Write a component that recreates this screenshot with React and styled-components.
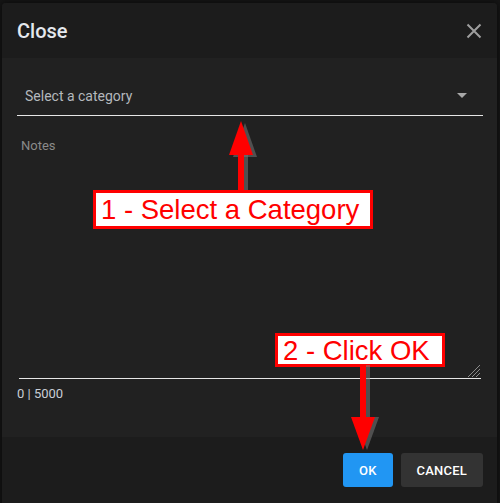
import React from "react";
import styled, { createGlobalStyle } from "styled-components";

const GlobalStyle = createGlobalStyle`
  html, body {
    margin: 0;
    padding: 0;
    background: #151515;
    font-family: Roboto, "Noto Sans", sans-serif;
    overflow: hidden;
  }
`;

const Page = styled.div`
  position: relative;
  width: 500px;
  height: 503px;
  padding: 3px 0 0 2px;
  box-sizing: border-box;
`;

const Dialog = styled.div`
  width: 495px;
  height: 520px;
  background: #212121;
  border-radius: 4px;
  overflow: hidden;
  display: flex;
  flex-direction: column;
  box-shadow: 0 0 6px rgba(0, 0, 0, 0.6);
`;

const Header = styled.div`
  height: 55px;
  background: #1c1c1c;
  display: flex;
  align-items: center;
  justify-content: space-between;
  padding: 0 11px 0 15px;
  flex-shrink: 0;
`;

const Title = styled.h2`
  margin: 0;
  font-size: 20px;
  font-weight: 500;
  color: #e4e8ee;
`;

const CloseButton = styled.button`
  background: none;
  border: none;
  padding: 0;
  width: 24px;
  height: 24px;
  display: flex;
  align-items: center;
  justify-content: center;
  cursor: pointer;
`;

const Body = styled.div`
  height: 379px;
  padding: 0 14px 0 15px;
  display: flex;
  flex-direction: column;
  flex-shrink: 0;
`;

const SelectField = styled.div`
  margin-top: 17px;
  height: 40px;
  display: flex;
  align-items: center;
  justify-content: space-between;
  border-bottom: 1px solid #e6e6e6;
  padding: 0 16px 0 8px;
`;

const Placeholder = styled.span`
  font-size: 14px;
  color: #b4b8bd;
  padding-top: 2px;
`;

const NotesArea = styled.div`
  margin: 18px 2px 0 2px;
  height: 245px;
  border-bottom: 1px solid #e6e6e6;
  position: relative;
  padding: 1px 2px;
  box-sizing: border-box;
`;

const NotesLabel = styled.span`
  font-size: 13px;
  color: #8a8a8a;
`;

const Grip = styled.svg`
  position: absolute;
  right: 0;
  bottom: 0;
`;

const Counter = styled.div`
  margin-top: 7px;
  font-size: 13px;
  color: #c9ced6;
`;

const Footer = styled.div`
  flex: 1;
  background: #1c1c1c;
  display: flex;
  justify-content: flex-end;
  align-items: flex-start;
  gap: 8px;
  padding: 16px 14px 0 0;
`;

const Button = styled.button`
  height: 34px;
  padding: 0 16px;
  min-width: ${(p) => p.$minWidth || 64}px;
  border: none;
  border-radius: 3px;
  background: ${(p) => (p.$primary ? "#2196f3" : "#333333")};
  color: #fff;
  font-family: Roboto, sans-serif;
  font-size: 13px;
  font-weight: 500;
  letter-spacing: 0.2px;
  cursor: pointer;
`;

const Callout = styled.div`
  position: absolute;
  left: ${(p) => p.$x}px;
  top: ${(p) => p.$y}px;
  width: ${(p) => p.$w}px;
  height: ${(p) => p.$h}px;
  box-sizing: border-box;
  background: #fff;
  border: 3px solid #ff0000;
  color: #ff0000;
  font-family: "Liberation Sans", Arial, sans-serif;
  font-size: 27.5px;
  line-height: 1;
  display: flex;
  align-items: center;
  padding-left: 5px;
  padding-top: 1px;
  white-space: nowrap;
`;

const ArrowSvg = styled.svg`
  position: absolute;
  left: ${(p) => p.$x}px;
  top: ${(p) => p.$y}px;
  overflow: visible;
`;

const UpArrow = () => (
  <ArrowSvg $x={226} $y={118} width="32" height="74">
    <g fill="rgba(120,120,120,0.55)" transform="translate(3,2)">
      <polygon points="16,3 28,37 4,37" />
      <rect x="13" y="35" width="6" height="40" />
    </g>
    <polygon points="15,3 27,37 3,37" fill="#ff0000" />
    <rect x="12" y="35" width="6" height="39" fill="#ff0000" />
  </ArrowSvg>
);

const DownArrow = () => (
  <ArrowSvg $x={350} $y={365} width="32" height="86">
    <g fill="rgba(120,120,120,0.55)" transform="translate(3,0)">
      <rect x="11" y="0" width="6" height="54" />
      <polygon points="2,52 26,52 14,85" />
    </g>
    <rect x="10" y="0" width="6" height="54" fill="#ff0000" />
    <polygon points="1,52 25,52 13,85" fill="#ff0000" />
  </ArrowSvg>
);

const App = () => {
  return (
    <Page>
      <GlobalStyle />
      <Dialog>
        <Header>
          <Title>Close</Title>
          <CloseButton aria-label="close">
            <svg width="16" height="16" viewBox="0 0 16 16">
              <path d="M1.5 1.5 L14.5 14.5 M14.5 1.5 L1.5 14.5" stroke="#9e9e9e" strokeWidth="2" />
            </svg>
          </CloseButton>
        </Header>
        <Body>
          <SelectField>
            <Placeholder>Select a category</Placeholder>
            <svg width="10" height="5" viewBox="0 0 10 5">
              <polygon points="0,0 10,0 5,5" fill="#a8a8a8" />
            </svg>
          </SelectField>
          <NotesArea>
            <NotesLabel>Notes</NotesLabel>
            <Grip width="14" height="14" viewBox="0 0 14 14">
              <path d="M13 1 L1 13 M13 5 L5 13 M13 9 L9 13" stroke="#8a8a8a" strokeWidth="1" />
            </Grip>
          </NotesArea>
          <Counter>0 | 5000</Counter>
        </Body>
        <Footer>
          <Button $primary $minWidth={49}>OK</Button>
          <Button $minWidth={82}>CANCEL</Button>
        </Footer>
      </Dialog>

      <UpArrow />
      <Callout $x={93} $y={190} $w={280} $h={39}>1 - Select a Category</Callout>
      <Callout $x={275} $y={333} $w={170} $h={34}>2 - Click OK</Callout>
      <DownArrow />
    </Page>
  );
};

export default App;
